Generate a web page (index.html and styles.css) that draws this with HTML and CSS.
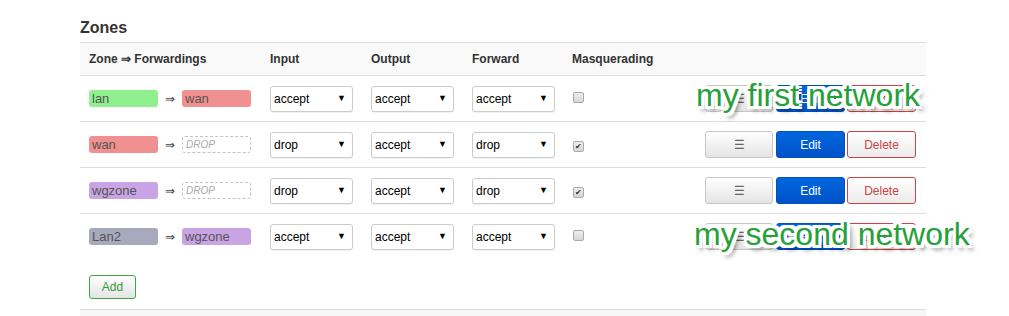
FILE: index.html
```html
<!DOCTYPE html>
<html lang="en">
<head>
    <meta charset="UTF-8">
    <meta name="viewport" content="width=device-width, initial-scale=1.0">
    <title>Zones</title>
    <link rel="stylesheet" href="styles.css">
</head>
<body>
    <div class="zones">
        <h3>Zones</h3>

        <div class="table">
            <div class="tr th">
                <div>Zone &rArr; Forwardings</div>
                <div>Input</div>
                <div>Output</div>
                <div>Forward</div>
                <div>Masquerading</div>
                <div></div>
            </div>

            <div class="tr">
                <div class="fwd">
                    <span class="zone lan">lan</span><span class="arrow">&rArr;</span><span class="zone wan">wan</span>
                </div>
                <div><span class="sel"><select><option>accept</option></select></span></div>
                <div><span class="sel"><select><option>accept</option></select></span></div>
                <div><span class="sel"><select><option>accept</option></select></span></div>
                <div><span class="check"></span></div>
                <div class="actions">
                    <button class="btn">&#9776;</button><button class="btn edit">Edit</button><button class="btn delete">Delete</button>
                </div>
            </div>

            <div class="tr">
                <div class="fwd">
                    <span class="zone wan">wan</span><span class="arrow">&rArr;</span><span class="zone drop">DROP</span>
                </div>
                <div><span class="sel"><select><option>drop</option></select></span></div>
                <div><span class="sel"><select><option>accept</option></select></span></div>
                <div><span class="sel"><select><option>drop</option></select></span></div>
                <div><span class="check checked">&#10004;</span></div>
                <div class="actions">
                    <button class="btn">&#9776;</button><button class="btn edit">Edit</button><button class="btn delete">Delete</button>
                </div>
            </div>

            <div class="tr">
                <div class="fwd">
                    <span class="zone wg">wgzone</span><span class="arrow">&rArr;</span><span class="zone drop">DROP</span>
                </div>
                <div><span class="sel"><select><option>drop</option></select></span></div>
                <div><span class="sel"><select><option>accept</option></select></span></div>
                <div><span class="sel"><select><option>drop</option></select></span></div>
                <div><span class="check checked">&#10004;</span></div>
                <div class="actions">
                    <button class="btn">&#9776;</button><button class="btn edit">Edit</button><button class="btn delete">Delete</button>
                </div>
            </div>

            <div class="tr">
                <div class="fwd">
                    <span class="zone lan2">Lan2</span><span class="arrow">&rArr;</span><span class="zone wg">wgzone</span>
                </div>
                <div><span class="sel"><select><option>accept</option></select></span></div>
                <div><span class="sel"><select><option>accept</option></select></span></div>
                <div><span class="sel"><select><option>accept</option></select></span></div>
                <div><span class="check"></span></div>
                <div class="actions">
                    <button class="btn">&#9776;</button><button class="btn edit">Edit</button><button class="btn delete">Delete</button>
                </div>
            </div>
        </div>

        <div class="add-row">
            <button class="btn add">Add</button>
        </div>
        <div class="footer-band"></div>

        <!-- annotations drawn over the screenshot -->
        <span class="note note-1">my first network</span>
        <span class="note note-2">my second network</span>
    </div>
</body>
</html>
```

FILE: styles.css
```css
body {
    margin: 0;
    background: #fff;
    font-family: "Liberation Sans", Arial, sans-serif;
    font-size: 12px;
    color: #333;
}

.zones {
    position: relative;
    width: 846px;
    margin-left: 80px;
}

h3 {
    font-size: 16px;
    line-height: 20px;
    margin: 0;
    padding-top: 18px;
    padding-bottom: 4px;
    color: #333;
}

.table {
    border-top: 1px solid #ddd;
}

.tr {
    display: grid;
    grid-template-columns: 181px 101px 101px 100px 1fr auto;
    align-items: center;
    height: 45px;
    padding: 0 10px 0 9px;
    border-top: 1px solid #ddd;
}
.tr.th {
    height: 32px;
    border-top: none;
    background: #f9f9f9;
    font-weight: bold;
    color: #333;
}

/* zone badges */
.fwd {
    display: flex;
    align-items: center;
}
.zone {
    display: inline-block;
    box-sizing: border-box;
    width: 69px;
    height: 17px;
    line-height: 17px;
    padding-left: 3px;
    border-radius: 3px;
    color: #555;
    font-size: 13px;
}
.lan  { background: #90f090; }
.wan  { background: #f09090; }
.wg   { background: #c9a4e4; }
.lan2 { background: #a9a9bd; }
.zone.drop {
    border: 1px dashed #c4c4c4;
    line-height: 15px;
    font-size: 10px;
    font-style: italic;
    color: #aaa;
}
.arrow {
    width: 24px;
    text-align: center;
    color: #444;
    font-size: 12px;
}

/* selects */
.sel {
    position: relative;
    display: inline-block;
}
.sel select {
    appearance: none;
    -webkit-appearance: none;
    width: 83px;
    height: 26px;
    padding: 0 0 0 3px;
    border: 1px solid #ccc;
    border-radius: 3px;
    background: #fff;
    box-shadow: 0 1px 1px rgba(0,0,0,.06);
    font-family: "Liberation Sans", Arial, sans-serif;
    font-size: 12px;
    color: #000;
}
.sel::after {
    content: "\25BC";
    position: absolute;
    right: 7px;
    top: 7px;
    font-size: 9px;
    color: #000;
    pointer-events: none;
}

/* checkbox */
.check {
    display: inline-block;
    box-sizing: border-box;
    width: 11px;
    height: 11px;
    margin-left: 1px;
    border: 1px solid #aaa;
    border-radius: 2px;
    background: linear-gradient(#eee, #d6d6d6);
    font-size: 8px;
    line-height: 9px;
    text-align: center;
    color: #333;
}

/* buttons */
.actions {
    display: flex;
}
.btn {
    box-sizing: border-box;
    height: 27px;
    width: 68px;
    border: 1px solid #c6c6c6;
    border-radius: 3px;
    background: linear-gradient(#fff, #e4e4e4);
    font-family: "Liberation Sans", Arial, sans-serif;
    font-size: 12px;
    color: #666;
    padding: 0;
}
.btn.edit {
    width: 69px;
    margin-left: 3px;
    border-color: #0050c0;
    background: linear-gradient(#0066dd, #0052c8);
    color: #fff;
}
.btn.delete {
    width: 69px;
    margin-left: 2px;
    border-color: #c44;
    color: #c44;
    background: linear-gradient(#fff, #ebebeb);
}

.add-row {
    height: 50px;
    padding-left: 9px;
    display: flex;
    align-items: center;
}
.btn.add {
    width: 47px;
    height: 24px;
    border-color: #3fa63f;
    color: #3a9a3a;
    margin-top: 6px;
}

.footer-band {
    height: 8px;
    border-top: 1px solid #ddd;
    background: #f7f7f7;
}

/* green annotations */
.note {
    position: absolute;
    font-family: "Liberation Sans", Arial, sans-serif;
    font-size: 32px;
    line-height: 32px;
    color: #27a03a;
    white-space: nowrap;
    text-shadow:
        -3px -3px 0 #fff, 3px -3px 0 #fff, -3px 3px 0 #fff, 3px 3px 0 #fff,
        0 -3px 0 #fff, 0 3px 0 #fff, -3px 0 0 #fff, 3px 0 0 #fff,
        -2px -3px 0 #fff, 2px -3px 0 #fff, -2px 3px 0 #fff, 2px 3px 0 #fff,
        4px 5px 4px rgba(0,0,0,.5);
}
.note-1 {
    left: 616px;
    top: 79px;
}
.note-2 {
    left: 614px;
    top: 218px;
}
```
